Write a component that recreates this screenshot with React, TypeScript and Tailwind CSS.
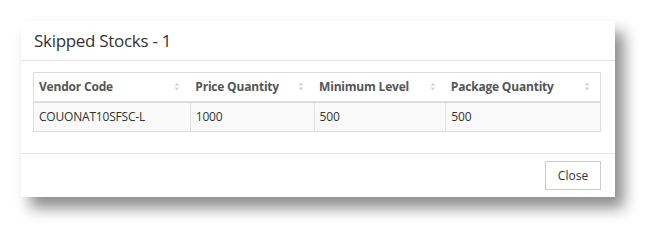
import React from 'react';

const columns = ['Vendor Code', 'Price Quantity', 'Minimum Level', 'Package Quantity'];
const widths = ['w-[157px]', 'w-[124px]', 'w-[132px]', 'w-[155px]'];
const rows = [['COUONAT10SFSC-L', '1000', '500', '500']];

function SortIcon() {
  return (
    <svg width="6" height="9" viewBox="0 0 6 9" className="shrink-0">
      <path d="M3 0.5 L5.5 3.5 H0.5 Z" fill="#d4d4d4" />
      <path d="M3 8.5 L5.5 5.5 H0.5 Z" fill="#d4d4d4" />
    </svg>
  );
}

export default function App() {
  return (
    <div className="w-[657px] h-[240px] bg-white pt-[21px] pl-[21px]" style={{ fontFamily: '"Open Sans", "Liberation Sans", sans-serif' }}>
      <div className="w-[594px] h-[176px] bg-white flex flex-col shadow-[9px_11px_14px_rgba(0,0,0,0.45)]">
        <div className="h-[40px] border-b border-[#e5e5e5] flex items-center px-[13px]">
          <h4 className="text-[17px] text-[#333] tracking-[-0.3px]">Skipped Stocks - 1</h4>
        </div>
        <div className="pt-[11px] pl-[12px] pr-[14px] h-[92px]">
          <table className="border-collapse border border-[#ddd] text-[12px] tracking-[-0.2px]">
            <thead>
              <tr className="h-[29px]">
                {columns.map((c, i) => (
                  <th key={c} className={`${widths[i]} border-b-2 border-[#ddd] px-[5px] text-left font-bold text-[#555]`}>
                    <div className="flex items-center justify-between pr-[5px]">
                      <span>{c}</span>
                      <SortIcon />
                    </div>
                  </th>
                ))}
              </tr>
            </thead>
            <tbody>
              {rows.map((r, ri) => (
                <tr key={ri} className="h-[30px] bg-[#f9f9f9]">
                  {r.map((v, i) => (
                    <td key={i} className={`${widths[i]} border border-[#ddd] px-[5px] text-[#333]`}>{v}</td>
                  ))}
                </tr>
              ))}
            </tbody>
          </table>
        </div>
        <div className="flex-1 border-t border-[#e5e5e5] flex items-center justify-end pr-[14px]">
          <button className="h-[29px] w-[56px] border border-[#ccc] bg-white text-[12px] text-[#333]">Close</button>
        </div>
      </div>
    </div>
  );
}
